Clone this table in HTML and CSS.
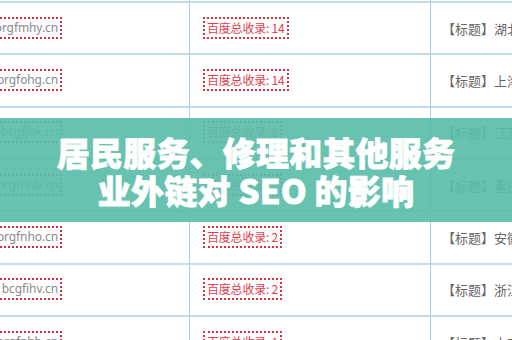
FILE: index.html
```html
<!DOCTYPE html>
<html lang="zh-CN">
<head>
<meta charset="utf-8">
<link rel="stylesheet" href="styles.css">
</head>
<body>
<div class="page">
  <div class="table">
    <div class="cell c1"></div><div class="cell c2"></div><div class="cell c3"></div>

    <div class="cell c1"><div class="clip"><span class="dom">orgfmhy.cn</span></div></div>
    <div class="cell c2"><span class="cnt">百度总收录: 14</span></div>
    <div class="cell c3"><span class="tit">【标题】湖北省</span></div>

    <div class="cell c1"><div class="clip"><span class="dom">orgfohg.cn</span></div></div>
    <div class="cell c2"><span class="cnt">百度总收录: 14</span></div>
    <div class="cell c3"><span class="tit">【标题】上海市</span></div>

    <div class="cell c1"><div class="clip"><span class="dom">bcgfjhk.cn</span></div></div>
    <div class="cell c2"><span class="cnt">百度总收录: 8</span></div>
    <div class="cell c3"><span class="tit">【标题】江苏省</span></div>

    <div class="cell c1"><div class="clip"><span class="dom">orgfohb.cn</span></div></div>
    <div class="cell c2"><span class="cnt">百度总收录: 2</span></div>
    <div class="cell c3"><span class="tit">【标题】重庆市</span></div>

    <div class="cell c1"><div class="clip"><span class="dom">orgfnho.cn</span></div></div>
    <div class="cell c2"><span class="cnt">百度总收录: 2</span></div>
    <div class="cell c3"><span class="tit">【标题】安徽省</span></div>

    <div class="cell c1"><div class="clip"><span class="dom">bcgfihv.cn</span></div></div>
    <div class="cell c2"><span class="cnt">百度总收录: 2</span></div>
    <div class="cell c3"><span class="tit">【标题】浙江省</span></div>

    <div class="cell c1"><div class="clip"><span class="dom">orgfnhb.cn</span></div></div>
    <div class="cell c2"><span class="cnt">百度总收录: 1</span></div>
    <div class="cell c3"><span class="tit">【标题】山东省</span></div>
  </div>

  <div class="banner">
    <h1 class="title">居民服务、修理和其他服务<br>业外链对 SEO 的影响</h1>
  </div>
</div>
</body>
</html>
```

FILE: styles.css
```css
html, body {
  margin: 0;
  padding: 0;
  background: #ffffff;
}

.page {
  position: relative;
  width: 512px;
  height: 340px;
  overflow: hidden;
  background: #ffffff;
}

.table {
  display: grid;
  grid-template-columns: 190px 241px 1fr;
  grid-auto-rows: 52.33px;
  margin-top: -49.33px;
}

.cell {
  box-sizing: border-box;
  display: flex;
  align-items: center;
  border-bottom: 2px solid #c3dcec;
  overflow: hidden;
}

.c1, .c2 {
  border-right: 1px solid #a4cde6;
}

.clip {
  width: 62px;
  display: flex;
  justify-content: flex-end;
  overflow: hidden;
  flex: none;
  margin-top: -1px;
}

.dom {
  flex: none;
  border: 2px dotted #c8313f;
  padding: 0 2px 0 8px;
  height: 18px;
  line-height: 18px;
  font-family: "Noto Sans", "Noto Sans CJK SC", sans-serif;
  font-size: 12px;
  letter-spacing: -0.1px;
  color: #8a8a8a;
  white-space: nowrap;
}

.c2 {
  padding-left: 13px;
}

.cnt {
  border: 2px dotted #d8323f;
  padding: 0 2px;
  height: 18px;
  line-height: 18px;
  margin-top: -1px;
  font-family: "Noto Sans CJK SC", sans-serif;
  font-size: 12px;
  color: #e0404e;
  white-space: nowrap;
  letter-spacing: -0.2px;
}

.c3 {
  padding-left: 11px;
}

.tit {
  font-family: "Noto Sans CJK SC", sans-serif;
  font-size: 13px;
  color: #666666;
  white-space: nowrap;
}

.banner {
  position: absolute;
  left: 0;
  right: 0;
  top: 118px;
  height: 104px;
  background: rgba(90, 189, 169, 0.92);
  display: flex;
  align-items: center;
  justify-content: center;
}

.title {
  margin: 0;
  margin-top: 2px;
  font-family: "Noto Sans CJK SC", sans-serif;
  font-weight: 900;
  font-size: 33px;
  line-height: 38px;
  color: #ffffff;
  text-align: center;
  letter-spacing: 0.2px;
  -webkit-text-stroke: 0.8px #ffffff;
}
```
